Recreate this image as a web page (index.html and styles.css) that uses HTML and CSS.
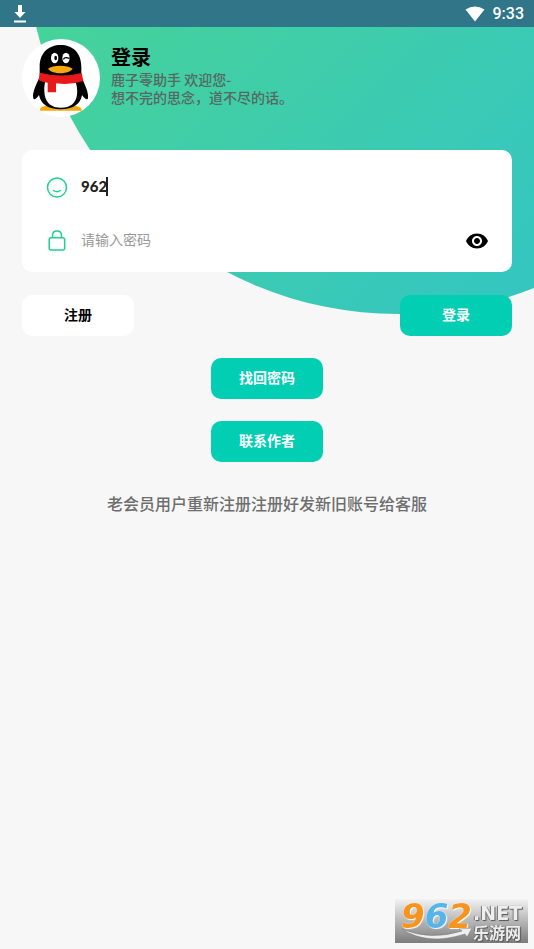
FILE: index.html
```html
<!DOCTYPE html>
<html lang="zh-CN">
<head>
    <meta charset="UTF-8">
    <meta name="viewport" content="width=device-width, initial-scale=1.0">
    <title>登录</title>
    <link rel="stylesheet" href="styles.css">
</head>
<body>
    <div class="status-bar">
        <svg class="download-icon" viewBox="0 0 14 18" width="14" height="18" aria-hidden="true">
            <path d="M5 0h4v7h3.5L7 13 1.5 7H5zM1 15.5h12v2H1z" fill="#fff"/>
        </svg>
        <div class="status-right">
            <svg viewBox="0 0 20 16" width="20" height="16" aria-hidden="true">
                <path d="M0.5 3.5Q10-2.5 19.5 3.5L10 15.5z" fill="#fff"/>
            </svg>
            <span>9:33</span>
        </div>
    </div>

    <main class="page">
        <div class="bg-circle"></div>

        <header class="profile">
            <svg class="avatar" viewBox="24 27 234 234" width="78" height="78" role="img" aria-label="头像">
                <path d="M78 242q-2-10 14-14h94q19 4 17 14z" fill="#f5a80c"/>
                <path d="M77 110C77 68 104 45 140 45s62 23 62 65v32c10 20 23 47 20 63-2 7-11 0-18-10-4 27-27 43-64 43s-60-16-65-43c-7 10-15 17-17 10-4-16 9-43 19-63z" fill="#000"/>
                <path d="M95 150h88c6 16 8 30 6 44-3 25-20 39-48 39s-45-14-49-39c-2-14-2-28 3-44z" fill="#fff"/>
                <path d="M78 128q61 17 125 1l5 24q-37 13-82 7v27h-25v-29q-16-2-27-7z" fill="#e8191b"/>
                <path d="M102 116c14-12 58-12 74 0-12 18-62 18-74 0z" fill="#f5a80c"/>
                <ellipse cx="122" cy="84" rx="11" ry="16" fill="#fff"/>
                <ellipse cx="156" cy="84" rx="11" ry="16" fill="#fff"/>
                <ellipse cx="125" cy="84" rx="4" ry="7" fill="#000"/>
                <path d="M148 88q4-6 9-5l10 2" fill="none" stroke="#000" stroke-width="4"/>
            </svg>
            <div class="profile-text">
                <h1>登录</h1>
                <p>鹿子零助手 欢迎您-</p>
                <p>想不完的思念，道不尽的话。</p>
            </div>
        </header>

        <form>
            <div class="card">
                <div class="field">
                    <label for="account" aria-label="账号">
                        <svg viewBox="0 0 24 24" width="24" height="24" fill="none" stroke="#1fd08f" stroke-width="1.5" stroke-linecap="round">
                            <circle cx="12" cy="11.5" r="9.5"/>
                            <path d="M8.5 14.5q3.5 2.400 7 0"/>
                        </svg>
                    </label>
                    <div class="input-wrap">
                        <input id="account" class="account" type="text" value="962">
                        <span class="caret"></span>
                    </div>
                </div>
                <div class="field">
                    <label for="password" aria-label="密码">
                        <svg viewBox="0 0 24 24" width="24" height="24" fill="none" stroke="#1fd08f" stroke-width="1.5">
                            <rect x="4.2" y="8.7" width="15.5" height="12.2" rx="2"/>
                            <path d="M7.5 8.7V6.500q0-4.500 4.500-4.500T16.500 6.500v2.200"/>
                        </svg>
                    </label>
                    <div class="input-wrap">
                        <input id="password" type="password" placeholder="请输入密码">
                    </div>
                    <button class="eye" type="button" aria-label="显示密码">
                        <svg viewBox="0 0 24 24" width="24" height="24">
                            <path d="M12 4.5C7 4.5 2.73 7.61 1 12c1.73 4.39 6 7.5 11 7.5s9.27-3.11 11-7.5c-1.73-4.39-6-7.5-11-7.5zM12 17c-2.76 0-5-2.24-5-5s2.24-5 5-5 5 2.24 5 5-2.24 5-5 5zm0-8c-1.66 0-3 1.34-3 3s1.34 3 3 3 3-1.34 3-3-1.34-3-3-3z"/>
                        </svg>
                    </button>
                </div>
            </div>

            <div class="actions">
                <button class="btn btn-white" type="button">注册</button>
                <button class="btn" type="submit">登录</button>
            </div>
            <div class="more">
                <button class="btn" type="button">找回密码</button>
                <button class="btn" type="button">联系作者</button>
            </div>
        </form>

        <p class="notice">老会员用户重新注册注册好发新旧账号给客服</p>
    </main>

    <div class="watermark">
        <div class="wm-number"><span>9</span><span class="blue">6</span><span>2</span></div>
        <div class="wm-text">
            <span class="wm-net">.NET</span>
            <span class="wm-name">乐游网</span>
        </div>
        <svg class="wm-swoosh" viewBox="0 0 72 14" width="72" height="14" aria-hidden="true">
            <path d="M1 1q28 12 60 2l-3-2 13-1-5 9-2-3Q26 18 1 1z" fill="#eee" stroke="#777" stroke-width="0.5"/>
        </svg>
    </div>
</body>
</html>
```

FILE: styles.css
```css
* {
    box-sizing: border-box;
}
body {
    margin: 0;
    min-height: 100vh;
    display: flex;
    flex-direction: column;
    background-color: #f7f7f7;
    color: #000;
    font-family: "Noto Sans CJK SC", sans-serif;
}
h1, p {
    margin: 0;
}
.status-bar {
    height: 27px;
    padding: 0 10px 0 13px;
    display: flex;
    align-items: center;
    justify-content: space-between;
    background-color: #317688;
}
.status-right {
    display: flex;
    align-items: center;
    gap: 8px;
    color: #fff;
    font: 500 16px Roboto, sans-serif;
}
.page {
    position: relative;
    flex: 1;
    padding: 12px 22px 0;
    overflow: hidden;
}
/* big gradient circle behind the form */
.bg-circle {
    position: absolute;
    z-index: -1;
    top: -461px;
    right: -236px;
    width: 744px;
    height: 748px;
    border-radius: 50%;
    background: linear-gradient(135deg, #47d398 30%, #35c6c0 80%);
}
.profile {
    display: flex;
    gap: 11px;
}
.avatar {
    border-radius: 50%;
    background-color: #fff;
}
.profile-text {
    padding-top: 5px;
}
.profile-text h1 {
    font-size: 20px;
    line-height: 26px;
}
.profile-text p {
    font-size: 14px;
    line-height: 18px;
    font-weight: 500;
    color: #566762;
}
.card {
    margin-top: 33px;
    padding: 11px 23px 5px;
    background-color: #fff;
    border-radius: 10px;
}
.field {
    height: 53px;
    display: flex;
    align-items: center;
    gap: 12px;
}
.field svg {
    display: block;
}
.input-wrap {
    position: relative;
    flex: 1;
}
.input-wrap input {
    display: block;
    width: 100%;
    height: 28px;
    padding: 0 0 4px;
    border: 0;
    outline: 0;
    background: none;
    font-family: inherit;
    font-size: 14px;
}
.input-wrap .account {
    font-family: Lato, sans-serif;
    font-size: 15px;
    font-weight: 900;
    color: #222;
}
.input-wrap input::placeholder {
    color: #999;
}
.caret {
    position: absolute;
    left: 25px;
    top: 3px;
    width: 2px;
    height: 19px;
    background-color: #222;
}
.eye {
    padding: 0;
    border: 0;
    background: none;
}
.actions {
    margin-top: 23px;
    display: flex;
    justify-content: space-between;
}
.more {
    margin-top: 22px;
    display: flex;
    flex-direction: column;
    align-items: center;
    gap: 22px;
}
.btn {
    width: 112px;
    height: 41px;
    padding: 0 0 4px;
    border: 0;
    border-radius: 10px;
    background-color: #02ceb4;
    color: #fff;
    font-family: inherit;
    font-size: 14px;
    font-weight: bold;
}
.btn-white {
    background-color: #fff;
    color: #000;
}
.notice {
    margin-top: 29px;
    text-align: center;
    font-size: 16px;
    line-height: 24px;
    font-weight: 500;
    color: #6e6e6e;
}
.watermark {
    position: fixed;
    right: 6px;
    bottom: 6px;
    width: 133px;
    height: 44px;
    padding-left: 6px;
    display: flex;
    gap: 1px;
    background: linear-gradient(#f2f2f2, #7c7c7c);
}
.wm-number {
    font: italic bold 34px/34px "DejaVu Sans", sans-serif;
    color: #f7941d;
    text-shadow: 0 0 1px #fff, 1px 1px 1px #fff;
}
.wm-number .blue {
    color: #55b4e8;
}
.wm-text {
    padding-top: 5px;
    display: flex;
    flex-direction: column;
    color: #eee;
    text-shadow: 1px 1px 1px #555, -1px 0 1px #777;
}
.wm-net {
    font: bold 19px/18px "DejaVu Sans", sans-serif;
}
.wm-name {
    font-size: 16px;
    font-weight: bold;
    line-height: 20px;
}
.wm-swoosh {
    position: absolute;
    left: 6px;
    bottom: 1px;
}
```
